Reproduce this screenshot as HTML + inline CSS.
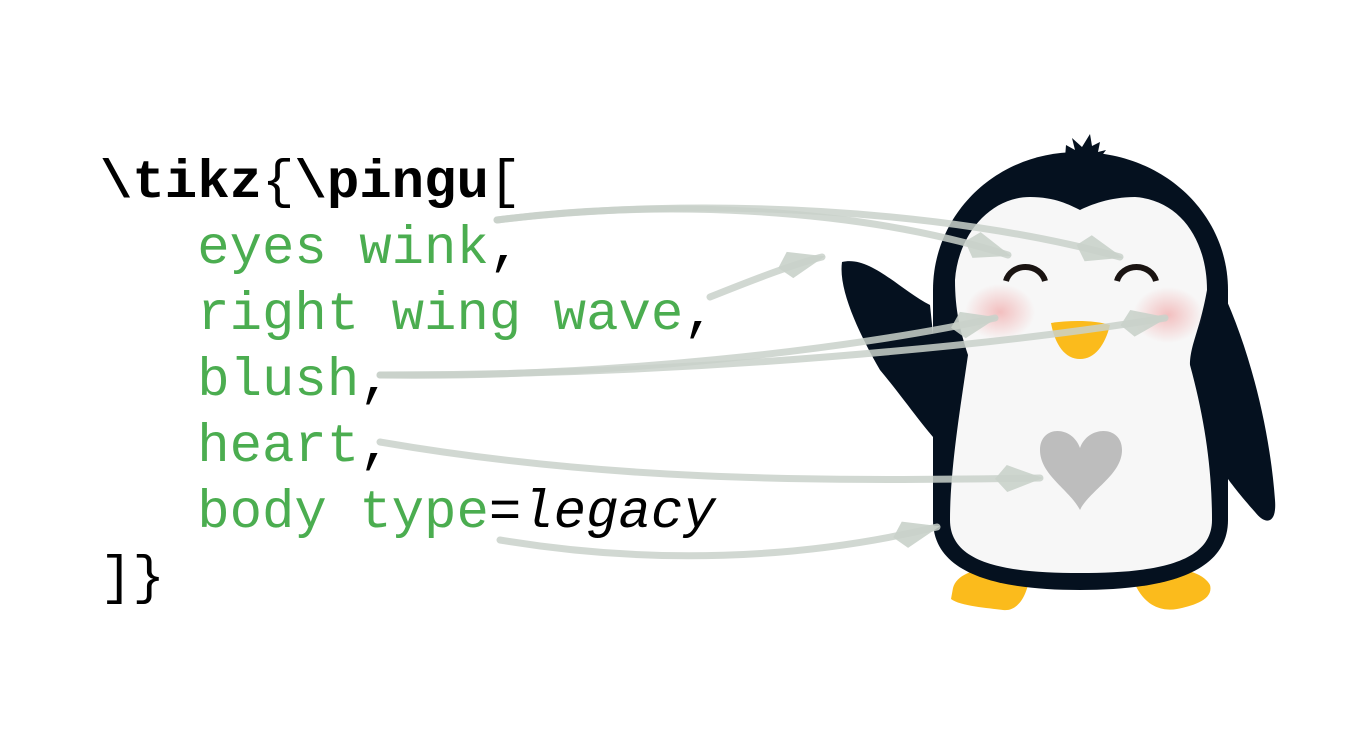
<!DOCTYPE html>
<html><head><meta charset="utf-8"><style>
html,body{margin:0;padding:0;background:#fff;width:1370px;height:753px;overflow:hidden}
.code{position:absolute;left:100px;top:151px;font-family:"Liberation Mono",monospace;font-size:54px;line-height:66px;color:#000;white-space:pre}
.g{color:#4bad50}
b{font-weight:bold}
svg{position:absolute;left:0;top:0}
</style></head><body>
<div class="code"><b>\tikz</b>{<b>\pingu</b>[
   <span class="g">eyes wink</span>,
   <span class="g">right wing wave</span>,
   <span class="g">blush</span>,
   <span class="g">heart</span>,
   <span class="g">body type</span>=<i>legacy</i>
]}</div>
<svg width="1370" height="753" viewBox="0 0 1370 753">
<defs>
<radialGradient id="bl"><stop offset="0" stop-color="#f2b8b8" stop-opacity=".9"/><stop offset="1" stop-color="#f2b8b8" stop-opacity="0"/></radialGradient>
<marker id="ah" markerWidth="48" markerHeight="30" refX="15" refY="5" orient="auto" markerUnits="userSpaceOnUse" viewBox="0 0 16 10"><path d="M0 5 L4 0.5 L16 5 L4 9.5 Z" fill="#c9d1ca" fill-opacity=".9"/></marker>
</defs>
<!-- wings -->
<path d="M842 262 C870 255 900 290 930 305 L945 450 C925 430 905 400 880 370 C860 335 838 290 842 262Z" fill="#05111f"/>
<path d="M1222 290 C1250 350 1270 430 1275 500 C1277 525 1265 525 1255 512 C1240 495 1228 480 1222 470Z" fill="#05111f"/>
<!-- feet -->
<path d="M953 588 C958 570 990 563 1030 573 C1028 595 1018 612 1003 610 C988 608 960 606 951 599Z" fill="#fbbb1c"/>
<path d="M1131 573 C1170 563 1202 570 1210 585 C1214 600 1192 606 1177 609 C1160 612 1140 605 1131 573Z" fill="#fbbb1c"/>
<!-- body -->
<path d="M1078 152 C1165 152 1228 215 1228 290 L1228 520 C1228 575 1160 590 1080 590 C1000 590 933 575 933 520 L933 290 C933 215 995 152 1078 152Z" fill="#05111f"/>
<path d="M1066 145 L1075 150 L1072 138 L1082 147 L1090 134 L1092 146 L1100 142 L1098 152 L1106 150 L1100 158 L1065 158Z" fill="#05111f"/>
<path d="M1030 197 C1055 197 1070 205 1080 210 C1090 205 1110 197 1135 197 C1180 200 1207 240 1207 290 C1200 330 1190 345 1190 365 C1205 420 1212 470 1212 520 C1212 565 1150 573 1080 573 C1010 573 950 565 950 520 C950 470 960 410 968 355 C960 330 955 310 955 280 C958 235 990 197 1030 197Z" fill="#f7f7f7"/>
<!-- blush -->
<ellipse cx="1000" cy="312" rx="35" ry="28" fill="url(#bl)"/>
<ellipse cx="1168" cy="315" rx="35" ry="28" fill="url(#bl)"/>
<!-- eyes -->
<path d="M1006 281 A20 18 0 0 1 1045 281" fill="none" stroke="#1a1412" stroke-width="6"/>
<path d="M1117 281 A20 18 0 0 1 1156 281" fill="none" stroke="#1a1412" stroke-width="6"/>
<!-- beak -->
<path d="M1051 323 C1070 320 1095 320 1110 325 C1105 345 1095 359 1080 359 C1065 359 1055 345 1051 323Z" fill="#fbbb1c"/>
<!-- heart -->
<path d="M1080 510 C1070 490 1040 475 1040 450 C1040 425 1072 425 1080 448 C1088 425 1122 425 1122 450 C1122 475 1090 490 1080 510Z" fill="#bdbdbd"/>
<!-- arrows -->
<g fill="none" stroke="#c9d1ca" stroke-opacity=".85" stroke-width="7" stroke-linecap="round">
<path d="M497 220 C650 200 850 205 1008 255" marker-end="url(#ah)"/>
<path d="M497 220 C700 195 950 210 1120 257" marker-end="url(#ah)"/>
<path d="M710 297 C740 285 790 265 822 257" marker-end="url(#ah)"/>
<path d="M380 375 C600 378 850 350 995 318" marker-end="url(#ah)"/>
<path d="M380 375 C700 375 1000 345 1165 318" marker-end="url(#ah)"/>
<path d="M380 442 C600 480 800 482 1040 478" marker-end="url(#ah)"/>
<path d="M500 540 C650 565 800 560 937 527" marker-end="url(#ah)"/>
</g>
</svg>
</body></html>
